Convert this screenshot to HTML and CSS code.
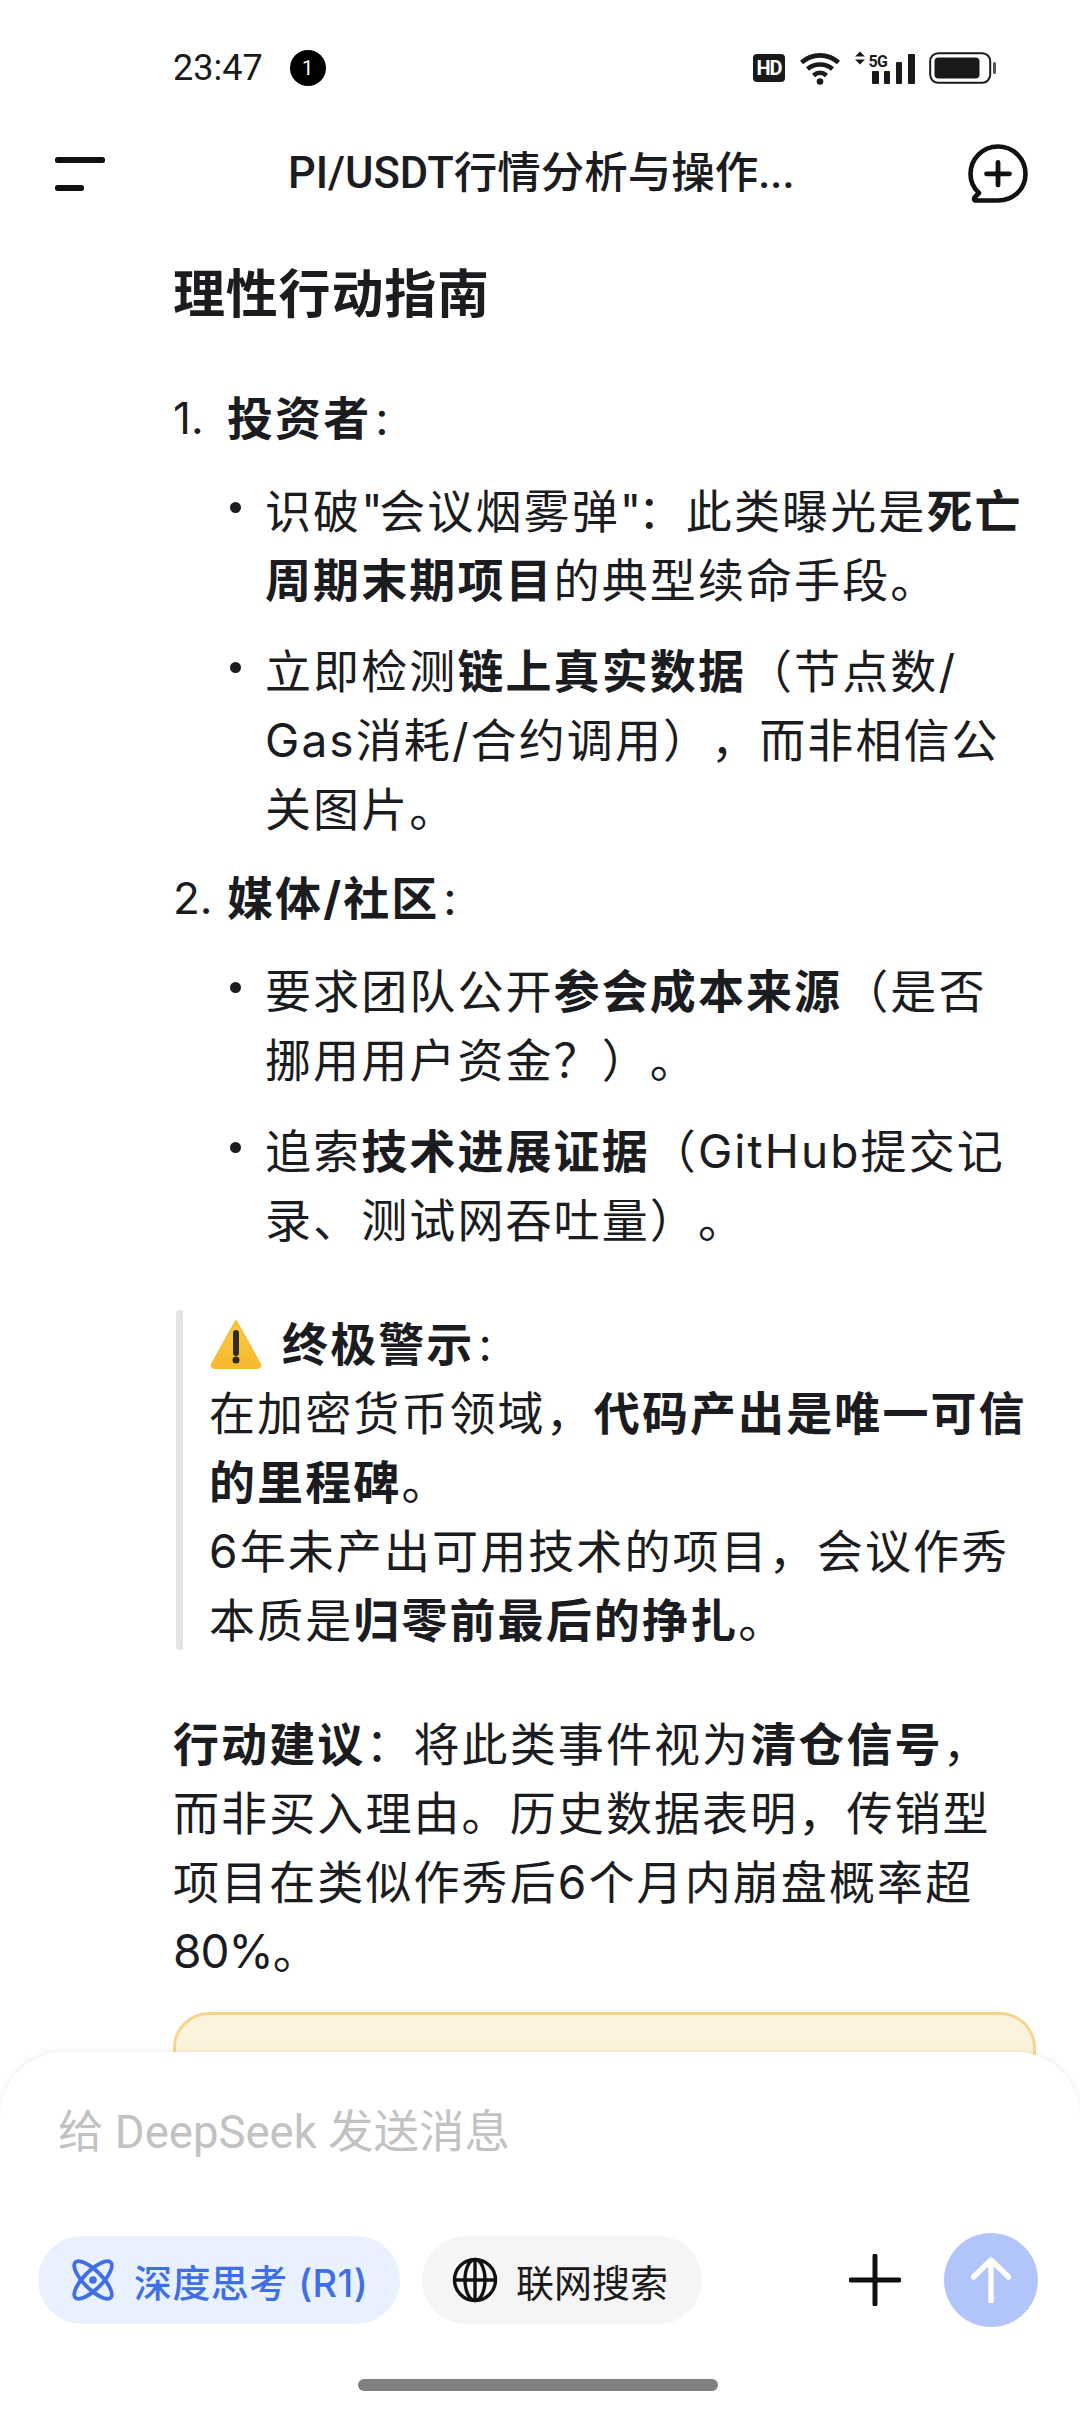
FILE: index.html
```html
<!DOCTYPE html>
<html lang="zh-CN">
<head>
<meta charset="utf-8">
<title>DeepSeek</title>
<link rel="stylesheet" href="styles.css">
</head>
<body>
<div class="screen">
  <div class="status">
    <div class="status-left">
      <span class="time">23:47</span>
      <span class="notif">1</span>
    </div>
    <div class="status-right">
      <span class="hd">HD</span>
      <svg class="wifi" width="42" height="34" viewBox="0 0 42 34"><path d="M2.500 11.500C13 2 29 2 39.500 11.500M8.500 18C15.500 12 26.500 12 33.500 18M14.500 24.500C18.500 21 23.500 21 27.500 24.500" fill="none" stroke="#1a1a1a" stroke-width="4.600"/><circle cx="21" cy="30.500" r="3.300" fill="#1a1a1a"/></svg>
      <svg class="signal" width="60" height="34" viewBox="0 0 60 34"><path d="M0 5.500L5 0.500L10 5.500ZM0 8.500L5 13.500L10 8.500Z" fill="#1a1a1a"/><text x="13.500" y="15.500" class="sig5g">5G</text><rect x="17" y="20" width="7" height="13" rx="1" fill="#1a1a1a"/><rect x="29" y="20" width="6" height="13" rx="1" fill="#1a1a1a"/><rect x="41" y="11" width="6" height="22" rx="1" fill="#1a1a1a"/><rect x="53" y="3" width="7" height="30" rx="1" fill="#1a1a1a"/></svg>
      <svg class="battery" width="68" height="32" viewBox="0 0 68 32"><rect x="1.200" y="1.200" width="60" height="29.600" rx="8" fill="none" stroke="#1a1a1a" stroke-width="2"/><rect x="5.500" y="5.500" width="45" height="21" rx="4" fill="#1a1a1a"/><rect x="64" y="10" width="3" height="12" rx="1.500" fill="#555"/></svg>
    </div>
  </div>

  <header class="topbar">
    <svg class="menu" width="50" height="34" viewBox="0 0 50 34"><rect x="0" y="0" width="50" height="6" rx="2.500" fill="#111"/><rect x="0" y="28" width="29" height="6" rx="2.500" fill="#111"/></svg>
    <h1 class="title">PI/USDT行情分析与操作...</h1>
    <svg class="newchat" width="60" height="60" viewBox="0 0 60 60"><path d="M11 49C5.500 44 2.500 37 2.500 30C2.500 15 14.500 2.500 30 2.500C45.500 2.500 57.500 15 57.500 30C57.500 45 45.500 56.500 30 56.500H8C6 56.500 5.500 54.500 7 53Z" fill="none" stroke="#111" stroke-width="4.600" stroke-linejoin="round"/><path d="M30 18.500V41M18.500 29.800H41.500" fill="none" stroke="#111" stroke-width="4.800" stroke-linecap="round"/></svg>
  </header>

  <main class="content">
    <h2 class="heading">理性行动指南</h2>

    <div class="row num-row first">
      <span class="num">1.</span>
      <p class="line"><b>投资者</b><span class="colon">:</span></p>
    </div>
    <div class="row bullet-row">
      <span class="dot"></span>
      <p class="line">识破<span class="tight">"</span>会议烟雾弹<span class="tight">"</span>：此类曝光是<b>死亡周期末期项目</b>的典型续命手段。</p>
    </div>
    <div class="row bullet-row">
      <span class="dot"></span>
      <p class="line">立即检测<b>链上真实数据</b>（节点数/<wbr>Gas消耗/合约调用），而非相信公关图片。</p>
    </div>

    <div class="row num-row">
      <span class="num">2.</span>
      <p class="line"><b>媒体/社区</b><span class="colon">:</span></p>
    </div>
    <div class="row bullet-row">
      <span class="dot"></span>
      <p class="line">要求团队公开<b>参会成本来源</b>（是否<br>挪用用户资金？）。</p>
    </div>
    <div class="row bullet-row">
      <span class="dot"></span>
      <p class="line">追索<b>技术进展证据</b>（GitHub提交记录、测试网吞吐量）。</p>
    </div>

    <blockquote class="quote">
      <p class="line"><svg class="warn" width="54" height="52" viewBox="0 0 54 52"><defs><linearGradient id="warn-fill" x1="0" y1="0" x2="0" y2="1"><stop offset="0" stop-color="#fccf45"/><stop offset="1" stop-color="#f6b62c"/></linearGradient></defs><path d="M27 3L51 46C52 48 51 50 48 50H6C3 50 2 48 3 46Z" fill="url(#warn-fill)" stroke="#f8bc30" stroke-width="2" stroke-linejoin="round"/><path d="M27 15V35" stroke="#2c2c2c" stroke-width="6" stroke-linecap="round"/><circle cx="27" cy="42" r="3.500" fill="#2c2c2c"/></svg> <b>终极警示</b><span class="colon">:</span></p>
      <p class="line">在加密货币领域，<b>代码产出是唯一可信的里程碑</b>。</p>
      <p class="line">6年未产出可用技术的项目，会议作秀本质是<b>归零前最后的挣扎</b>。</p>
    </blockquote>

    <p class="line advice"><b>行动建议</b>：将此类事件视为<b>清仓信号</b>，而非买入理由。历史数据表明，传销型项目在类似作秀后6个月内崩盘概率超<span class="pct">80%</span>。</p>

    <div class="notice"></div>
  </main>

  <footer class="composer">
    <div class="placeholder">给 DeepSeek 发送消息</div>
    <div class="tools">
      <div class="chip chip-active">
        <svg width="46" height="46" viewBox="0 0 46 46"><g fill="none" stroke="#3f6fe6" stroke-width="3.800"><ellipse cx="23" cy="23" rx="9" ry="25" transform="rotate(45 23 23)"/><ellipse cx="23" cy="23" rx="9" ry="25" transform="rotate(-45 23 23)"/></g><circle cx="23" cy="23" r="3.800" fill="#3f6fe6"/></svg>
        <span>深度思考 (R1)</span>
      </div>
      <div class="chip chip-plain">
        <svg width="46" height="46" viewBox="0 0 46 46"><g fill="none" stroke="#111" stroke-width="3.400"><circle cx="23" cy="23" r="20.500"/><ellipse cx="23" cy="23" rx="10" ry="20.500"/><path d="M3 23H43"/><path d="M23 3V43"/></g></svg>
        <span>联网搜索</span>
      </div>
      <div class="spacer"></div>
      <svg class="plus" width="52" height="52" viewBox="0 0 52 52"><path d="M26 2V50M2 26H50" fill="none" stroke="#111" stroke-width="5" stroke-linecap="round"/></svg>
      <div class="send">
        <svg width="40" height="46" viewBox="0 0 40 46"><path d="M20 44V3M2.500 20L20 3L37.500 20" fill="none" stroke="#fff" stroke-width="5.400" stroke-linecap="round" stroke-linejoin="round"/></svg>
      </div>
    </div>
    <div class="home-wrap"><div class="home"></div></div>
  </footer>
</div>
</body>
</html>
```

FILE: styles.css
```css
* { box-sizing: border-box; }
html, body { margin: 0; padding: 0; background: #fff; }
body {
  font-family: "Inter", "Noto Sans CJK SC", sans-serif;
  color: #1a1c1f;
  text-spacing-trim: space-all;
}
.screen {
  position: relative;
  width: 1080px;
  height: 2412px;
  overflow: hidden;
  background: #fff;
}

/* status bar */
.status {
  height: 136px;
  padding: 48px 83px 0 173px;
  display: flex;
  justify-content: space-between;
  align-items: flex-start;
}
.status-left { display: flex; align-items: center; gap: 27px; height: 40px; }
.time { font-family: "Roboto", sans-serif; font-size: 36px; color: #1a1a1a; line-height: 40px; }
.notif {
  width: 36px; height: 36px; border-radius: 50%;
  background: #000; color: #fff;
  font: 20px/36px "Roboto", sans-serif;
  text-align: center;
}
.status-right { display: flex; align-items: center; height: 40px; gap: 14px; }
.hd {
  width: 32px; height: 28px; border-radius: 4px;
  background: #1a1a1a; color: #fff;
  font: 700 20px/28px "Roboto", sans-serif;
  text-align: center; letter-spacing: -1px;
}
.sig5g { font: 700 16px "Roboto", sans-serif; fill: #1a1a1a; letter-spacing: -.8px; }

/* header */
.topbar {
  height: 76px;
  padding: 0 52px 0 55px;
  display: flex;
  align-items: center;
}
.menu { flex: none; }
.title {
  flex: 1;
  margin: 0;
  padding-left: 183px;
  font-family: "Roboto", "Noto Sans CJK SC", sans-serif;
  font-weight: 500;
  font-size: 43.500px;
  line-height: 76px;
  color: #1a1c1f;
}
.newchat { flex: none; }

/* article */
.content { padding: 38px 46px 0 173px; }
.heading {
  margin: 0;
  font-size: 52px;
  font-weight: 700;
  line-height: 90px;
  letter-spacing: .8px;
}
.line {
  margin: 0;
  font-size: 46px;
  line-height: 69px;
  letter-spacing: 2.100px;
}
.line b { font-weight: 700; }
.colon { margin-left: 4px; }
.tight { letter-spacing: -3.400px; }
.pct { letter-spacing: -1px; }
.row { display: flex; align-items: flex-start; }
.num-row { margin-top: 20px; }
.num-row.first { margin-top: 44px; }
.num {
  flex: none;
  width: 54px;
  font-size: 44px;
  line-height: 69px;
}
.bullet-row { margin-top: 22px; padding-left: 57px; }
.num-row + .bullet-row { margin-top: 24px; }
.bullet-row .line { flex: 1; }
.dot {
  flex: none;
  width: 11px; height: 11px;
  border-radius: 50%;
  background: #1a1c1f;
  margin: 25px 24px 0 0;
}
.quote {
  margin: 55px 0 0 3px;
  padding: 0 0 0 26px;
  height: 340px;
  border-left: 7px solid #e5e5e5;
  border-radius: 4px;
}
.warn { width: 54px; height: 52px; vertical-align: -9px; margin-right: 4px; }
.advice { margin-top: 60px; }
.notice {
  margin-top: 26px;
  margin-right: -2px;
  height: 120px;
  border: 3px solid #f6d58e;
  border-radius: 36px;
  background: #fdf3dd;
}

/* composer */
.composer {
  position: absolute;
  left: 0; right: 0; bottom: 0;
  height: 360px;
  background: #fff;
  border-radius: 64px 64px 0 0;
  box-shadow: 0 -1px 6px rgba(0,0,0,.08);
  padding: 51px 42px 0 38px;
}
.placeholder {
  padding-left: 20px;
  font-family: "Roboto", "Noto Sans CJK SC", sans-serif;
  font-size: 45.500px;
  line-height: 60px;
  color: #c2c2c2;
}
.tools {
  margin-top: 70px;
  display: flex;
  align-items: center;
  height: 94px;
}
.chip {
  height: 88px;
  border-radius: 44px;
  display: flex;
  align-items: center;
  gap: 18px;
  font-size: 38px;
  white-space: nowrap;
}
.chip svg { flex: none; }
.chip-active { width: 362px; padding-left: 32px; background: #e9f1fe; color: #3f6fe6; font-weight: 500; letter-spacing: .4px; }
.chip-plain { width: 280px; margin-left: 22px; padding-left: 30px; background: #f5f5f5; color: #1a1a1a; }
.spacer { flex: 1; }
.plus { flex: none; margin-right: 43px; }
.send {
  flex: none;
  width: 94px; height: 94px;
  border-radius: 50%;
  background: #b2c5fb;
  display: flex;
  align-items: center;
  justify-content: center;
}
.home-wrap { display: flex; justify-content: center; margin-top: 52px; }
.home { width: 360px; height: 12px; border-radius: 6px; background: #808080; }
```
